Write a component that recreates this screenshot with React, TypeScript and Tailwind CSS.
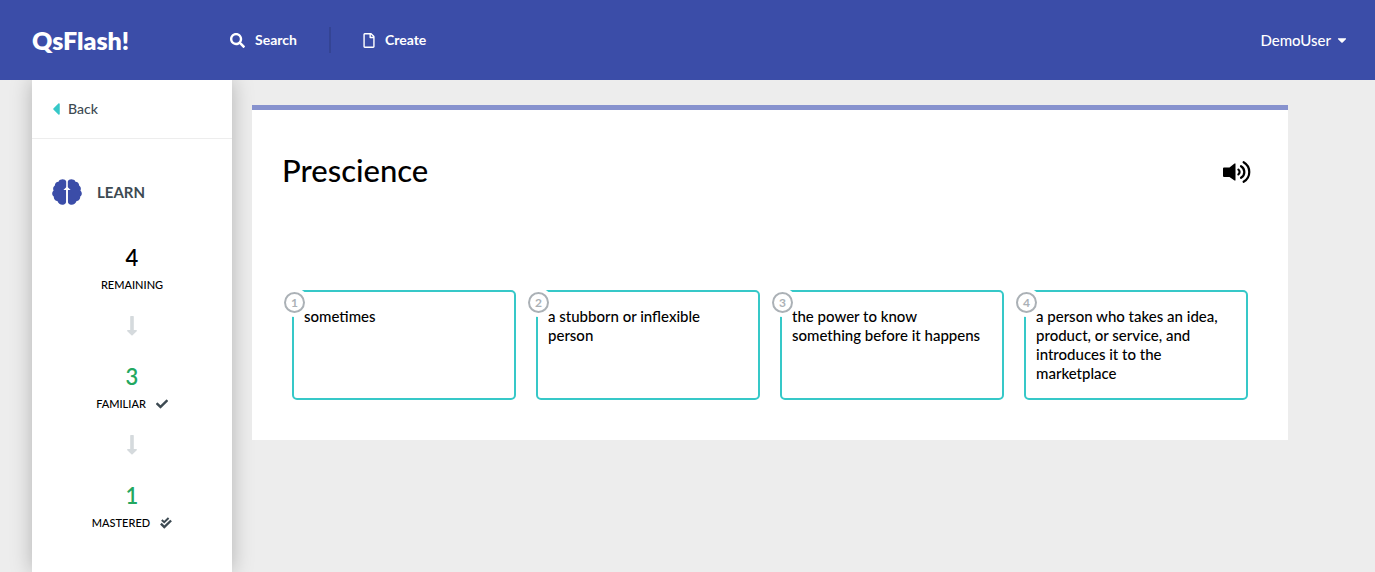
import type { ReactNode } from "react";
import { FaSearch, FaRegFile, FaCaretLeft, FaCaretDown, FaCheck } from "react-icons/fa";

const answers = [
  "sometimes",
  "a stubborn or inflexible person",
  "the power to know something before it happens",
  "a person who takes an idea, product, or service, and introduces it to the marketplace",
];

function BrainIcon() {
  return (
    <svg viewBox="0 0 30 28" className="h-7 w-[30px]" aria-hidden="true">
      <path
        fill="#3b4da8"
        d="M14.2 3.6C13.6 1.2 10.6 .6 8.4 1.7 7.4 2.1 6.8 2.9 6.5 3.8 4.3 4 2.700 5.600 2.900 7.600 1.100 8.800 .700 10.900 1.600 12.500-.400 14.200-.200 17.200 1.800 18.600 1.600 20.800 3.100 22.800 5.400 23.100 6.300 26.100 9.600 27.600 12 26.500 13.400 25.900 14.200 24.700 14.200 23.200Z"
      />
      <path
        fill="#3b4da8"
        d="M15.800 3.600C16.400 1.200 19.400 .6 21.600 1.700 22.600 2.100 23.200 2.900 23.500 3.800 25.700 4 27.300 5.600 27.100 7.600 28.900 8.800 29.300 10.900 28.400 12.500 30.400 14.200 30.200 17.200 28.200 18.600 28.400 20.800 26.900 22.800 24.600 23.100 23.700 26.100 20.400 27.600 18 26.500 16.600 25.900 15.800 24.700 15.800 23.200Z"
      />
      <path fill="#fff" d="M15 8.400 18.600 12H15.800v14h-1.600V12h-2.800Z" />
    </svg>
  );
}

function DoubleCheckIcon() {
  return (
    <svg viewBox="0 0 12 12" className="size-3" fill="none" stroke="#3d4a52" aria-hidden="true">
      <path strokeWidth="2" d="M1.800 3 4.200 5.200 8.600 1" />
      <path strokeWidth="2.400" d="M.900 6.600 4.300 10 11.100 3.500" />
    </svg>
  );
}

function SpeakerIcon() {
  return (
    <svg viewBox="0 0 28 24" className="h-6 w-7" aria-hidden="true">
      <path d="M1 7.500h5.500L11.500 3.500h1v17h-1L6.500 17H1a1 1 0 0 1-1-1V8.500a1 1 0 0 1 1-1Z" />
      <g fill="none" stroke="#000" strokeWidth="2.200" strokeLinecap="round">
        <path d="M15.400 9.700a2.800 2.800 0 0 1 0 4.600" />
        <path d="M18 6.200a6.700 6.700 0 0 1 0 11.600" />
        <path d="M20.600 2.200a11.300 11.300 0 0 1 0 19.600" />
      </g>
    </svg>
  );
}

function StepArrow() {
  return (
    <div className="flex h-[59px] justify-center pt-3.5" aria-hidden="true">
      <svg viewBox="0 0 10 20" className="h-5 w-2.5" fill="#d5dadd">
        <path d="M3.800 0h2.400a.6.6 0 0 1 .6.600V14h2.400c.7 0 1 .8.500 1.300L5.600 19.200a.9.9 0 0 1-1.200 0L.300 15.300C-.200 14.800.1 14 .8 14h2.400V.600A.6.6 0 0 1 3.800 0Z" />
      </svg>
    </div>
  );
}

function Stat({ value, label, color, icon }: { value: number; label: string; color: string; icon?: ReactNode }) {
  return (
    <div className="flex h-15 flex-col items-center">
      <span className={`text-[22px] leading-8 font-semibold ${color}`}>{value}</span>
      <span className="flex items-center gap-2.5 text-[11px] leading-[22px] font-medium">
        {label}
        {icon}
      </span>
    </div>
  );
}

export default function App() {
  return (
    <div className="flex min-h-screen flex-col bg-[#ededed] font-['Lato','Liberation_Sans',sans-serif] text-black">
      <header className="relative z-10 flex h-20 items-center bg-[#3b4da8] pr-[26px] pl-8 text-white">
        <a href="#home" className="w-[198px] text-[25px] leading-8 font-extrabold">QsFlash!</a>
        <nav className="flex items-center text-sm leading-5 font-bold">
          <a href="#search" className="flex items-center gap-2.5">
            <FaSearch className="size-[15px]" />
            Search
          </a>
          <span className="mx-8 h-[26px] w-0.5 bg-[#344494]" />
          <a href="#create" className="flex items-center gap-2.5">
            <FaRegFile className="h-[15px] w-3" />
            Create
          </a>
        </nav>
        <button type="button" className="ml-auto flex items-center gap-1 text-[15px] leading-5 font-medium">
          DemoUser
          <FaCaretDown className="size-3.5" />
        </button>
      </header>

      <div className="flex grow">
        <aside className="ml-8 w-[200px] shrink-0 bg-white shadow-[0_0_20px_rgba(0,0,0,0.25)]">
          <a href="#back" className="flex h-[59px] items-center gap-2 border-b border-[#ededed] px-5 text-sm font-medium text-[#3d4a52]">
            <FaCaretLeft className="h-5 w-2 text-[#36c8c8]" />
            Back
          </a>
          <div className="flex items-center gap-[15px] px-5 pt-[39px]">
            <BrainIcon />
            <h2 className="text-[15px] leading-5 font-bold text-[#3d4a52]">LEARN</h2>
          </div>
          <div className="pt-9">
            <Stat value={4} label="REMAINING" color="text-black" />
            <StepArrow />
            <Stat value={3} label="FAMILIAR" color="text-[#23a860]" icon={<FaCheck className="size-3 text-[#3d4a52]" />} />
            <StepArrow />
            <Stat value={1} label="MASTERED" color="text-[#23a860]" icon={<DoubleCheckIcon />} />
          </div>
        </aside>

        <main className="grow pt-[25px] pr-[87px] pl-5">
          <section className="border-t-[5px] border-[#8792ce] bg-white px-[30px] pt-10 pb-10">
            <div className="flex items-start justify-between pr-[7px]">
              <h1 className="text-[31px] leading-10 font-medium">Prescience</h1>
              <button type="button" aria-label="Play pronunciation" className="mt-2.5">
                <SpeakerIcon />
              </button>
            </div>
            <div className="mt-[100px] grid grid-cols-4 gap-5 px-2.5">
              {answers.map((answer, i) => (
                <button
                  key={answer}
                  type="button"
                  className="relative flex min-h-[110px] items-start rounded-[5px] border-2 border-[#36c8c8] pt-[15px] pr-4 pb-3.5 pl-2.5 text-left text-[15px] leading-[19px] font-medium"
                >
                  <span className="absolute top-0 -left-2.5 flex size-[21px] items-center justify-center rounded-full border-2 border-[#abb1b6] bg-white text-xs leading-4 font-bold text-[#abb1b6] ring-4 ring-white">
                    {i + 1}
                  </span>
                  {answer}
                </button>
              ))}
            </div>
          </section>
        </main>
      </div>
    </div>
  );
}
